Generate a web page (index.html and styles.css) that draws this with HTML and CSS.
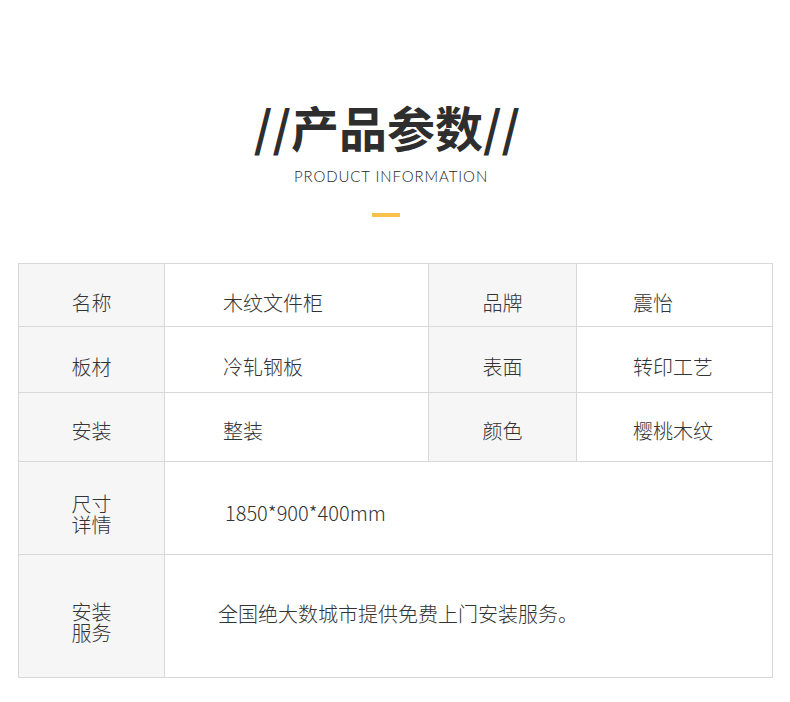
FILE: index.html
```html
<!DOCTYPE html>
<html lang="zh-CN">
<head>
<meta charset="utf-8">
<title>产品参数</title>
<link rel="stylesheet" href="styles.css">
</head>
<body>
<header class="head">
  <h1 class="title">//产品参数//</h1>
  <p class="subtitle">PRODUCT INFORMATION</p>
  <span class="bar"></span>
</header>
<section class="spec">
  <div class="cell label r1">名称</div>
  <div class="cell val r1">木纹文件柜</div>
  <div class="cell label r1">品牌</div>
  <div class="cell val val-r r1">震怡</div>

  <div class="cell label r2">板材</div>
  <div class="cell val r2">冷轧钢板</div>
  <div class="cell label r2">表面</div>
  <div class="cell val val-r r2">转印工艺</div>

  <div class="cell label r3">安装</div>
  <div class="cell val r3">整装</div>
  <div class="cell label r3">颜色</div>
  <div class="cell val val-r r3">樱桃木纹</div>

  <div class="cell label r4">尺寸<br>详情</div>
  <div class="cell val wide r4v">1850*900*400mm</div>

  <div class="cell label r5">安装<br>服务</div>
  <div class="cell val wide r5v">全国绝大数城市提供免费上门安装服务。</div>
</section>
</body>
</html>
```
FILE: styles.css
```css
html, body {
  margin: 0;
  padding: 0;
  background: #ffffff;
}
body {
  width: 790px;
  height: 702px;
  overflow: hidden;
  font-family: "Noto Sans CJK SC", "Noto Sans", sans-serif;
  color: #333333;
}
.head {
  display: flex;
  flex-direction: column;
  align-items: center;
  padding-top: 102px;
  padding-right: 16px;
  height: 161px;
  box-sizing: content-box;
}
.title {
  margin: 0;
  font-size: 48px;
  line-height: 48px;
  font-weight: 700;
  color: #2e2e2e;
  letter-spacing: 0;
}
.subtitle {
  margin: 19px 0 0;
  font-family: Lato, "Open Sans", sans-serif;
  font-weight: 300;
  font-size: 15px;
  line-height: 15px;
  letter-spacing: 0.9px;
  color: #1f1f1f;
  padding-left: 8px;
}
.bar {
  display: block;
  width: 28px;
  height: 4px;
  margin-top: 29px;
  background: #f9c04b;
  margin-right: 2px;
}
.spec {
  margin: 0 0 0 18px;
  width: 755px;
  box-sizing: border-box;
  display: grid;
  grid-template-columns: 145px 263px 147px 195px;
  grid-template-rows: 62px 65px 68px 92px 122px;
  gap: 1px;
  padding: 1px;
  background: #d8d8d8;
}
.cell {
  display: flex;
  align-items: center;
  background: #ffffff;
  font-size: 20px;
  line-height: 21px;
  font-weight: 300;
  box-sizing: border-box;
}
.label {
  background: #f6f6f6;
  justify-content: center;
  text-align: center;
}
.val {
  padding-left: 58px;
}
.val-r {
  padding-left: 56px;
}
.wide {
  grid-column: 2 / 5;
}
.r1, .r2 {
  padding-top: 14px;
}
.r3 {
  padding-top: 6px;
}
.r4 {
  padding-top: 12px;
}
.r4v {
  padding-top: 8px;
  padding-left: 60px;
}
.r5 {
  padding-top: 12px;
}
.r5v {
  padding-bottom: 6px;
  padding-left: 53px;
}
```
